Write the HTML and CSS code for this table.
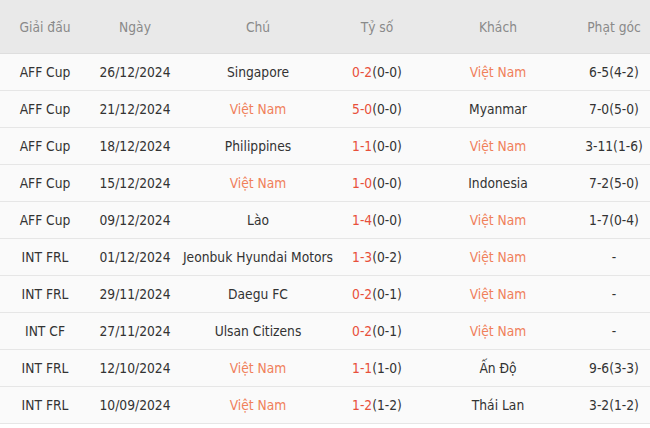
FILE: index.html
```html
<!DOCTYPE html>
<html lang="vi">
<head>
<meta charset="utf-8">
<link rel="stylesheet" href="styles.css">
</head>
<body>
<table class="tbl">
  <colgroup>
    <col class="c1"><col class="c2"><col class="c3"><col class="c4"><col class="c5"><col class="c6">
  </colgroup>
  <thead>
    <tr><th>Giải đấu</th><th>Ngày</th><th>Chú</th><th>Tỷ số</th><th>Khách</th><th>Phạt góc</th></tr>
  </thead>
  <tbody>
    <tr><td>AFF Cup</td><td>26/12/2024</td><td>Singapore</td><td><span class="sc">0-2</span>(0-0)</td><td class="vn">Việt Nam</td><td>6-5(4-2)</td></tr>
    <tr><td>AFF Cup</td><td>21/12/2024</td><td class="vn">Việt Nam</td><td><span class="sc">5-0</span>(0-0)</td><td>Myanmar</td><td>7-0(5-0)</td></tr>
    <tr><td>AFF Cup</td><td>18/12/2024</td><td>Philippines</td><td><span class="sc">1-1</span>(0-0)</td><td class="vn">Việt Nam</td><td>3-11(1-6)</td></tr>
    <tr><td>AFF Cup</td><td>15/12/2024</td><td class="vn">Việt Nam</td><td><span class="sc">1-0</span>(0-0)</td><td>Indonesia</td><td>7-2(5-0)</td></tr>
    <tr><td>AFF Cup</td><td>09/12/2024</td><td>Lào</td><td><span class="sc">1-4</span>(0-0)</td><td class="vn">Việt Nam</td><td>1-7(0-4)</td></tr>
    <tr><td>INT FRL</td><td>01/12/2024</td><td>Jeonbuk Hyundai Motors</td><td><span class="sc">1-3</span>(0-2)</td><td class="vn">Việt Nam</td><td>-</td></tr>
    <tr><td>INT FRL</td><td>29/11/2024</td><td>Daegu FC</td><td><span class="sc">0-2</span>(0-1)</td><td class="vn">Việt Nam</td><td>-</td></tr>
    <tr><td>INT CF</td><td>27/11/2024</td><td>Ulsan Citizens</td><td><span class="sc">0-2</span>(0-1)</td><td class="vn">Việt Nam</td><td>-</td></tr>
    <tr><td>INT FRL</td><td>12/10/2024</td><td class="vn">Việt Nam</td><td><span class="sc">1-1</span>(1-0)</td><td>Ấn Độ</td><td>9-6(3-3)</td></tr>
    <tr><td>INT FRL</td><td>10/09/2024</td><td class="vn">Việt Nam</td><td><span class="sc">1-2</span>(1-2)</td><td>Thái Lan</td><td>3-2(1-2)</td></tr>
  </tbody>
</table>
</body>
</html>
```
FILE: styles.css
```css
html, body {
  margin: 0;
  padding: 0;
  background: #ffffff;
}
body {
  font-family: "DejaVu Sans Condensed", "DejaVu Sans", sans-serif;
  font-size: 13.7px;
  color: #333333;
}
.tbl {
  width: 650px;
  border-collapse: collapse;
  table-layout: fixed;
}
.c1 { width: 90px; }
.c2 { width: 90px; }
.c3 { width: 156px; }
.c4 { width: 82px; }
.c5 { width: 160px; }
.c6 { width: 72px; }
.tbl th {
  height: 53px;
  padding: 0;
  background: #e9e9e9;
  color: #8a8a8a;
  font-weight: normal;
  text-align: center;
  vertical-align: middle;
  border-bottom: 1px solid #dedede;
}
.tbl td {
  height: 36px;
  padding: 0;
  background: #fafafa;
  text-align: center;
  vertical-align: middle;
  white-space: nowrap;
  border-bottom: 1px solid #e6e6e6;
}
.sc { color: #e8503a; }
.vn { color: #f0805a; }
```
